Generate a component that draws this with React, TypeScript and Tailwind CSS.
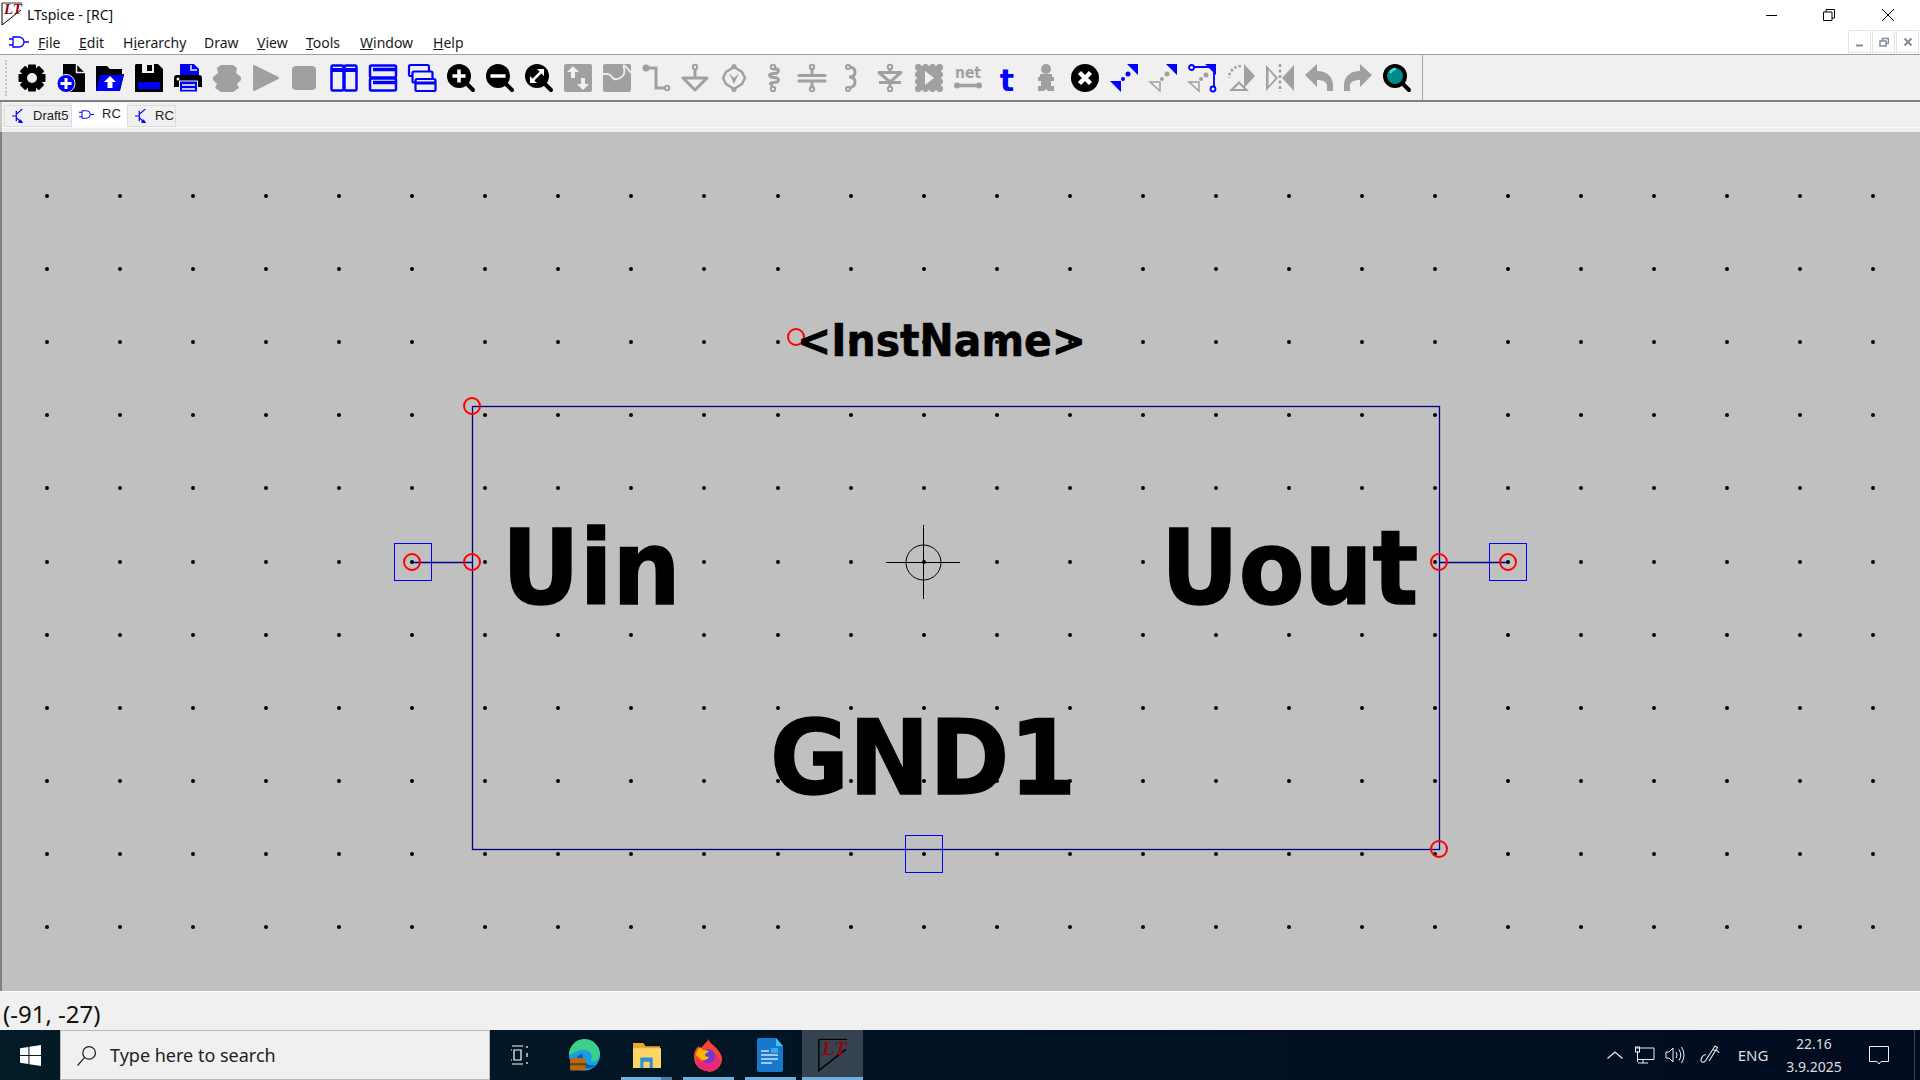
import type { ReactNode } from 'react';

const GRAY = '#a0a0a0';
const BLUE = '#0000ff';

const menuItems = [
    { pre: '', key: 'F', post: 'ile', w: 'w-[41px]' },
    { pre: '', key: 'E', post: 'dit', w: 'w-[44px]' },
    { pre: 'H', key: 'i', post: 'erarchy', w: 'w-[81px]' },
    { pre: '', key: '', post: 'Draw', w: 'w-[53px]' },
    { pre: '', key: 'V', post: 'iew', w: 'w-[49px]' },
    { pre: '', key: 'T', post: 'ools', w: 'w-[54px]' },
    { pre: '', key: 'W', post: 'indow', w: 'w-[73px]' },
    { pre: '', key: 'H', post: 'elp', w: 'w-[45px]' },
];

// toolbar glyphs, all in a 28x28 box
const toolIcons: ReactNode[] = [
    // settings
    <g key="gear" fill="#000">
        {[0, 45, 90, 135].map((a) => (
            <rect key={a} x="10" y="0.5" width="8" height="27" rx="1" transform={`rotate(${a} 14 14)`} />
        ))}
        <circle cx="14" cy="14" r="10.5" />
        <circle cx="14" cy="14" r="5" fill="#f0f0f0" />
    </g>,
    // new schematic
    <g key="new">
        <path d="M6 0h13l9 9v19H6z" fill="#000" />
        <path d="M19.500 0v8.500H28" fill="none" stroke="#f0f0f0" strokeWidth="1.500" />
        <circle cx="9" cy="19.500" r="9" fill={BLUE} stroke="#f0f0f0" strokeWidth="1" />
        <path d="M9 14v11M3.500 19.500h11" stroke="#fff" strokeWidth="3" />
    </g>,
    // open
    <g key="open">
        <path d="M0 2h11l3 3h12v5H0z" fill="#000" />
        <path d="M0 10h28l-4 17H0z" fill="#000" />
        <path d="M4 11h24l-4.500 16H0z" fill={BLUE} />
        <path d="M14 12l6 6h-3.500v6h-5v-6H8z" fill="#fff" />
    </g>,
    // save
    <g key="save">
        <path d="M1 0h22l5 5v23H0V1z" fill="#000" />
        <rect x="7" y="0" width="12" height="9" fill="#f0f0f0" />
        <rect x="12" y="1" width="5" height="6" fill="#000" />
        <rect x="3" y="18" width="22" height="7" fill={BLUE} />
    </g>,
    // print
    <g key="print">
        <path d="M6 0h14l5 5v6H6z" fill={BLUE} />
        <path d="M17 1v5h6" fill="none" stroke="#f0f0f0" strokeWidth="1.500" />
        <path d="M3 11h22q3 0 3 3v9H0v-9q0-3 3-3z" fill="#000" />
        <circle cx="4" cy="15" r="1.500" fill="#f0f0f0" />
        <rect x="5.500" y="17" width="18" height="11" fill={BLUE} stroke="#f0f0f0" strokeWidth="1" />
        <path d="M8 21h13M8 25h13" stroke="#fff" strokeWidth="1.500" />
    </g>,
    // halt
    <path key="halt" d="M8 1h12l4 3-1 5 5 4v3l-4 4 2 4-6 4H8l-6-4 2-4-4-4v-3l5-4-1-5z" fill={GRAY} />,
    // run
    <path key="run" d="M2 2l24 12L2 26z" fill={GRAY} stroke={GRAY} strokeWidth="2" strokeLinejoin="round" />,
    // stop
    <rect key="stop" x="1" y="2" width="24" height="24" rx="4" fill={GRAY} />,
    // tile vertically
    <g key="tilev" fill="none" stroke={BLUE} strokeWidth="2.500">
        <rect x="1.500" y="1.500" width="12" height="25" rx="1.500" />
        <rect x="14.500" y="1.500" width="12" height="25" rx="1.500" />
        <path d="M2 6h11M15 6h11" strokeWidth="4" />
    </g>,
    // tile horizontally
    <g key="tileh" fill="none" stroke={BLUE} strokeWidth="2.500">
        <rect x="1" y="1.500" width="26" height="12" rx="1.500" />
        <rect x="1" y="14.500" width="26" height="12" rx="1.500" />
        <path d="M4 5.500h22M4 18.500h22" strokeWidth="3.500" />
    </g>,
    // cascade
    <g key="cascade" stroke={BLUE} strokeWidth="2.200" fill="#f0f0f0">
        <rect x="1" y="1" width="20" height="11" rx="1.500" />
        <rect x="4.500" y="7.500" width="20" height="11" rx="1.500" />
        <rect x="7.500" y="15" width="20" height="12" rx="1.500" />
        <path d="M8 19h19" strokeWidth="3" />
    </g>,
    // zoom in
    <g key="zoomin">
        <path d="M18 18l8 8" stroke="#000" strokeWidth="4" strokeLinecap="round" />
        <circle cx="12" cy="12" r="12" fill="#000" />
        <path d="M12 5.500v13M5.500 12h13" stroke="#fff" strokeWidth="3.500" />
    </g>,
    // zoom out
    <g key="zoomout">
        <path d="M18 18l8 8" stroke="#000" strokeWidth="4" strokeLinecap="round" />
        <circle cx="12" cy="12" r="12" fill="#000" />
        <path d="M4.500 12h15" stroke="#fff" strokeWidth="3.500" />
    </g>,
    // zoom fit
    <g key="zoomfit">
        <path d="M18 18l8 8" stroke="#000" strokeWidth="4" strokeLinecap="round" />
        <circle cx="12" cy="12" r="12" fill="#000" />
        <path d="M7.500 16.500l9-9" stroke="#fff" strokeWidth="2.500" />
        <path d="M12 5h7v7zM12 19H5v-7z" fill="#fff" />
    </g>,
    // pan
    <g key="pan">
        <rect x="0" y="0" width="28" height="28" rx="2" fill={GRAY} />
        <path d="M9 2l6 6h-4v6H7V8H3zM19 26l-6-6h4v-6h4v6h4z" fill="#f0f0f0" />
    </g>,
    // waveform
    <g key="wave">
        <rect x="0" y="0" width="28" height="28" rx="2" fill={GRAY} />
        <path d="M0 10q7-1 9 3t8 1 4-10 7 5" fill="none" stroke="#f0f0f0" strokeWidth="1.800" />
    </g>,
    // wire
    <g key="wire" fill="none" stroke={GRAY} strokeWidth="3">
        <circle cx="4" cy="4" r="2" fill={GRAY} />
        <path d="M5 4h9v20h8" />
        <circle cx="25" cy="24" r="2.200" strokeWidth="2" />
    </g>,
    // ground
    <g key="gnd" fill="none" stroke={GRAY} strokeWidth="3">
        <circle cx="14" cy="3" r="2.200" strokeWidth="2" />
        <path d="M14 5v8M2 14h24L14 26z" strokeLinejoin="round" />
    </g>,
    // label
    <g key="label" fill="none" stroke={GRAY} strokeWidth="2.500">
        <circle cx="14" cy="2.500" r="1.800" strokeWidth="1.500" />
        <circle cx="14" cy="25.500" r="1.800" strokeWidth="1.500" />
        <path d="M14 3l8 5 3 6-3 6-8 5-8-5-3-6 3-6z" strokeLinejoin="round" />
        <path d="M9 9l5 11 5-11-5 5z" fill={GRAY} stroke="none" />
    </g>,
    // resistor
    <g key="res" fill="none" stroke={GRAY} strokeWidth="3">
        <circle cx="14" cy="3" r="2.200" strokeWidth="2" />
        <circle cx="14" cy="25" r="2.200" strokeWidth="2" />
        <path d="M14 5h4q3 1 0 4l-6 1q-3 1 0 3l6 1q3 2 0 4l-6 1q-2 1 2 2" />
    </g>,
    // capacitor
    <g key="cap" fill="none" stroke={GRAY} strokeWidth="3">
        <circle cx="14" cy="3" r="2.200" strokeWidth="2" />
        <circle cx="14" cy="25" r="2.200" strokeWidth="2" />
        <path d="M14 5v6M1 11.500h26M1 17h26M14 17v6" strokeLinecap="round" />
    </g>,
    // inductor
    <g key="ind" fill="none" stroke={GRAY} strokeWidth="3">
        <circle cx="11" cy="3" r="2" strokeWidth="2" />
        <circle cx="11" cy="25" r="2" strokeWidth="2" />
        <path d="M12 3q6 0 6 5t-6 5q6 0 6 5t-6 6" />
    </g>,
    // diode
    <g key="diode" fill="none" stroke={GRAY} strokeWidth="3">
        <circle cx="14" cy="3" r="2.200" strokeWidth="2" />
        <circle cx="14" cy="25" r="2.200" strokeWidth="2" />
        <path d="M14 5v3M3 8.500h22L14 18zM3 18.500h22M14 19v4" strokeLinejoin="round" />
    </g>,
    // component
    <g key="comp" fill={GRAY}>
        <rect x="0" y="0" width="28" height="28" rx="3" />
        {[7, 14, 21].map((p) => (
            <g key={p} fill="#f0f0f0">
                <circle cx="0" cy={p} r="1.800" />
                <circle cx="28" cy={p} r="1.800" />
                <circle cx={p} cy="0" r="1.800" />
                <circle cx={p} cy="28" r="1.800" />
            </g>
        ))}
        <path d="M10 7l9 7-9 7z" fill="#f0f0f0" />
    </g>,
    // net name
    <g key="net">
        <text x="1" y="14" textLength="26" lengthAdjust="spacingAndGlyphs" className="font-['DejaVu_Sans',sans-serif] font-bold text-[15px]" fill={GRAY}>net</text>
        <path d="M3 21.500h22" stroke={GRAY} strokeWidth="3.500" />
        <circle cx="3" cy="21.500" r="3" fill={GRAY} />
        <circle cx="25" cy="21.500" r="3" fill={GRAY} />
    </g>,
    // text
    <text key="t" x="14" y="27" textAnchor="middle" className="font-['DejaVu_Sans',sans-serif] font-bold text-[30px]" fill={BLUE}>t</text>,
    // spice directive
    <g key="dir" fill={GRAY}>
        <circle cx="14" cy="5" r="5" />
        <path d="M8 10h12v3h2v4h-3v5h3v5h-6l-2-2-2 2H6v-5h3v-5H6v-4h2z" />
    </g>,
    // delete
    <g key="del">
        <circle cx="14" cy="14" r="14" fill="#000" />
        <path d="M8.500 8.500l11 11M19.500 8.500l-11 11" stroke="#fff" strokeWidth="4.500" />
    </g>,
    // move
    <g key="move" fill={BLUE}>
        <path d="M28 0v11L17 0zM0 17h11v11z" />
        <circle cx="18" cy="10" r="2.500" />
        <circle cx="13" cy="15" r="2" />
    </g>,
    // drag
    <g key="drag">
        <path d="M28 0v11L17 0z" fill={BLUE} />
        <path d="M1 18h10v9z" fill="#f0f0f0" stroke={GRAY} strokeWidth="1.500" />
        <circle cx="18" cy="10" r="2.500" fill={GRAY} />
        <circle cx="13" cy="15" r="2" fill={GRAY} />
    </g>,
    // drag with wire
    <g key="wiredrag">
        <path d="M28 0v11L17 0z" fill={BLUE} />
        <path d="M1 18h10v9z" fill="#f0f0f0" stroke={GRAY} strokeWidth="1.500" />
        <circle cx="18" cy="11" r="2.500" fill={GRAY} />
        <circle cx="13" cy="15" r="2" fill={GRAY} />
        <path d="M5 3h21v21" fill="none" stroke={BLUE} strokeWidth="1.800" />
        <circle cx="3.500" cy="3.500" r="2.500" fill="#f0f0f0" stroke={BLUE} strokeWidth="1.800" />
        <circle cx="25" cy="25" r="2.500" fill="#f0f0f0" stroke={BLUE} strokeWidth="1.800" />
    </g>,
    // rotate
    <g key="rotate" fill={GRAY}>
        <path d="M17 0l11 12-11 12z" />
        <path d="M2 27l10-10 10 10zM7 25h10l-5-5z" fillRule="evenodd" />
        <path d="M14 2a12 12 0 0 0-12 12" fill="none" stroke={GRAY} strokeWidth="2.500" strokeDasharray="2.500 2" />
    </g>,
    // mirror
    <g key="mirror" fill={GRAY}>
        <path d="M28 1v26L16 14zM0 1v26l12-13zM2.500 6v16l7-8z" fillRule="evenodd" />
        <path d="M14 0v28" stroke={GRAY} strokeWidth="2.500" strokeDasharray="3 2.500" />
    </g>,
    // undo
    <path key="undo" d="M12 0v7c10 0 16 6 16 14v6h-6v-5c0-4-4-6-10-6v7L0 11z" fill={GRAY} />,
    // redo
    <path key="redo" d="M16 0v7C6 7 0 13 0 21v6h6v-5c0-4 4-6 10-6v7l12-12z" fill={GRAY} />,
    // find
    <g key="find">
        <path d="M18 18l8 8" stroke="#000" strokeWidth="4" strokeLinecap="round" />
        <circle cx="12" cy="12" r="10" fill="#008b8b" stroke="#000" strokeWidth="4" />
        <path d="M7 9q2-4 6-4" stroke="#40e0e0" strokeWidth="2.500" fill="none" />
    </g>,
];

const dotColumns = Array.from({ length: 26 }, (_, i) => Math.round(47 + i * 73.05));
const dotRows = [196, 269, 342, 415, 488, 562, 635, 708, 781, 854, 927];
const handles = [
    [472, 406],
    [472, 562],
    [412, 562],
    [1439, 562],
    [1508, 562],
    [1439, 849],
    [796, 337],
];

function GateIcon({ className }: { className: string }) {
    return (
        <svg viewBox="0 0 20 14" className={className} fill="none" stroke={BLUE} strokeWidth="1.300">
            <path d="M4 2h6a5 5 0 0 1 0 10H4zM0 4h4M0 10h4M15 7h5" />
        </svg>
    );
}

function TransistorIcon() {
    return (
        <svg viewBox="0 0 14 16" className="w-[12px] h-[14px]" fill="none" stroke={BLUE} strokeWidth="1.400">
            <path d="M0 8h5M5 2v12M12 0L5 6M5 10l7 6" />
            <path d="M12 16l-4-1 2-2z" fill={BLUE} />
        </svg>
    );
}

function LtLogo({ className }: { className: string }) {
    return (
        <svg viewBox="0 0 22 24" className={className}>
            <path d="M1 1v22L20 8" fill="none" stroke="#000" strokeWidth="1" />
            <path d="M1 1h20" stroke="#000" strokeWidth="0.800" />
            <text x="3" y="12" textLength="18" lengthAdjust="spacingAndGlyphs" className="font-['Liberation_Serif',serif] font-bold italic text-[14px]" fill="#8b0a14">LT</text>
        </svg>
    );
}

export default function App() {
    return (
        <div className="flex flex-col w-[1920px] h-[1080px] overflow-hidden bg-[#f0f0f0] font-['Noto_Sans',sans-serif] text-black">
            {/* title bar */}
            <div className="flex items-center h-[30px] bg-white">
                <LtLogo className="w-[22px] h-[24px] ml-[1px] mr-[4px] -mt-[2px]" />
                <span className="text-[14px] text-[#111] -mt-[2px]">LTspice - [RC]</span>
                <div className="ml-auto flex items-center mr-[2px]">
                    <div className="flex items-center justify-center w-[58px] h-[30px]">
                        <span className="w-[11px] h-px bg-black" />
                    </div>
                    <div className="flex items-center justify-center w-[58px] h-[30px]">
                        <svg viewBox="0 0 12 12" className="w-[12px] h-[12px]" fill="none" stroke="#000">
                            <path d="M0.500 3h8.500v8.500H0.500zM3 3V0.500h8.500V9H9" />
                        </svg>
                    </div>
                    <div className="flex items-center justify-center w-[60px] h-[30px]">
                        <svg viewBox="0 0 12 12" className="w-[12px] h-[12px]" fill="none" stroke="#000">
                            <path d="M0 0l12 12M12 0L0 12" />
                        </svg>
                    </div>
                </div>
            </div>

            {/* menu bar */}
            <div className="flex items-center h-[25px] bg-white border-b border-[#a0a0a0] text-[14px] text-[#1a1a1a]">
                <GateIcon className="w-[20px] h-[14px] ml-[9px] mr-[9px]" />
                {menuItems.map((item) => (
                    <div key={item.post} className={item.w}>
                        {item.pre}
                        <span className="underline">{item.key}</span>
                        {item.post}
                    </div>
                ))}
                <div className="ml-auto flex gap-[1px] mr-[1px] mb-[1px]">
                    {['-', 'r', 'x'].map((b) => (
                        <div key={b} className="flex items-center justify-center w-[23px] h-[23px] border border-[#e4e4e4]">
                            <svg viewBox="0 0 10 10" className="w-[10px] h-[10px]" fill="none" stroke="#7f8c99" strokeWidth="1.500">
                                {b === '-' && <path d="M1 8.500h7" strokeWidth="2" />}
                                {b === 'r' && <path d="M1 4h6v5H1zM3.500 4V1.500h6v5H7" />}
                                {b === 'x' && <path d="M1.500 1.500l7 7M8.500 1.500l-7 7" strokeWidth="2" />}
                            </svg>
                        </div>
                    ))}
                </div>
            </div>

            {/* toolbar */}
            <div className="flex items-center h-[47px] bg-[#f0f0f0] border-b-2 border-[#808080]">
                <div className="w-[18px] h-[36px] flex justify-center">
                    <div className="w-[2px] h-full border-l-2 border-dotted border-[#c4c4c4] -ml-[6px]" />
                </div>
                <div className="flex gap-[11px] w-[1405px] border-r border-[#a8a8a8] h-[45px] items-center">
                    {toolIcons.map((icon, i) => (
                        <svg key={i} viewBox="0 0 28 28" className="w-[28px] h-[28px] shrink-0 overflow-visible">
                            {icon}
                        </svg>
                    ))}
                </div>
            </div>

            {/* document tabs */}
            <div className="flex flex-col h-[30px] bg-[#f0f0f0] pl-[2px] border-l-2 border-[#c8c8c8] font-['Liberation_Sans',sans-serif] text-[13px] text-[#222]">
                <div className="flex h-[24px] mt-[1px]">
                    <div className="flex items-center w-[68px] h-[22px] mt-[2px] pl-[7px] gap-[9px] border border-[#dcdcdc]">
                        <TransistorIcon />
                        <span>Draft5</span>
                    </div>
                    <div className="flex items-center w-[55px] h-[24px] pl-[7px] gap-[8px] pb-[2px] bg-white">
                        <GateIcon className="w-[15px] h-[11px]" />
                        <span>RC</span>
                    </div>
                    <div className="flex items-center w-[49px] h-[22px] mt-[2px] pl-[7px] gap-[8px] border border-[#dcdcdc]">
                        <TransistorIcon />
                        <span>RC</span>
                    </div>
                </div>
                <div className="h-px bg-[#fafafa] -ml-[2px]" />
            </div>

            {/* schematic canvas */}
            <div className="relative flex-1 bg-[#c0c0c0] border-l-2 border-[#808080] overflow-hidden">
                <svg viewBox="2 132 1918 859" className="absolute inset-0 w-full h-full">
                    {dotRows.map((y) =>
                        dotColumns.map((x) => <circle key={`${x}-${y}`} cx={x} cy={y} r="2" fill="#000" />),
                    )}
                    <rect x="472.500" y="406.500" width="967" height="443" fill="none" stroke="#00008b" strokeWidth="1.300" />
                    <path d="M412 562.500h60M1439 562.500h69" stroke="#00008b" strokeWidth="1.300" />
                    <rect x="394.500" y="543.500" width="37" height="37" fill="none" stroke={BLUE} />
                    <rect x="1489.500" y="543.500" width="37" height="37" fill="none" stroke={BLUE} />
                    <rect x="905.500" y="835.500" width="37" height="37" fill="none" stroke={BLUE} />
                    <path d="M886 562.500h74M923.500 525v74" stroke="#000" />
                    <circle cx="923.500" cy="562.500" r="17.500" fill="none" stroke="#000" />
                    {handles.map(([x, y]) => (
                        <circle key={`${x}-${y}`} cx={x} cy={y} r="8" fill="none" stroke="#ff0000" strokeWidth="2" />
                    ))}
                </svg>
                <span className="absolute left-[795px] top-[187px] origin-left scale-x-[0.93] text-[44px] leading-none font-bold font-['DejaVu_Sans',sans-serif] whitespace-nowrap [-webkit-text-stroke:0.6px_black]">&lt;InstName&gt;</span>
                <span className="absolute left-[500px] top-[384px] origin-left scale-x-[0.92] text-[104px] leading-none font-bold font-['DejaVu_Sans',sans-serif] whitespace-nowrap [-webkit-text-stroke:1.5px_black]">Uin</span>
                <span className="absolute left-[1159px] top-[384px] origin-left scale-x-[0.92] text-[104px] leading-none font-bold font-['DejaVu_Sans',sans-serif] whitespace-nowrap [-webkit-text-stroke:1.5px_black]">Uout</span>
                <span className="absolute left-[768px] top-[574px] origin-left scale-x-[0.925] text-[104px] leading-none font-bold font-['DejaVu_Sans',sans-serif] whitespace-nowrap [-webkit-text-stroke:1.5px_black]">GND1</span>
            </div>

            {/* status bar */}
            <div className="flex items-center h-[39px] bg-[#f0f0f0] border-t border-white pl-[3px] pt-[6px] text-[24px] leading-none text-[#111]">
                (-91, -27)
            </div>

            {/* taskbar */}
            <div className="flex items-stretch h-[50px] bg-gradient-to-r from-[#021b27] to-[#020b20] text-white">
                <div className="flex items-center justify-center w-[60px]">
                    <svg viewBox="0 0 20 20" className="w-[21px] h-[21px]" fill="#fff">
                        <path d="M0 3l8-1.200v7.700H0zM9 1.600L20 0v9.500H9zM0 10.500h8v7.700L0 17zM9 10.500h11V20L9 18.400z" />
                    </svg>
                </div>
                <div className="flex items-center w-[430px] bg-[#f0f0f0] border border-[#b8b8b8] text-[#222]">
                    <svg viewBox="0 0 20 20" className="w-[21px] h-[21px] ml-[15px] mr-[13px]" fill="none" stroke="#222" strokeWidth="1.200">
                        <circle cx="12.500" cy="7.500" r="6" />
                        <path d="M8 12l-6.500 7.500" />
                    </svg>
                    <span className="text-[18px]">Type here to search</span>
                </div>
                <div className="flex items-center justify-center w-[59px]">
                    <svg viewBox="0 0 20 20" className="w-[20px] h-[20px]" fill="none" stroke="#fff" strokeWidth="1.200">
                        <path d="M2 1h11M2 19h11M4 5h7v10H4zM17 1v2M17 8v4M17 17v2M1 5h1M1 15h1M13 5h0" />
                    </svg>
                </div>
                {/* edge */}
                <div className="relative flex items-center justify-center w-[62px] ml-[4px]">
                    <svg viewBox="0 0 32 32" className="w-[33px] h-[34px]">
                        <circle cx="16" cy="16" r="15" fill="#1b9de2" />
                        <path d="M1 16A15 15 0 0 1 31 15c0 6-5 8-9 7 3-4 0-11-7-11-7 0-11 5-14 5z" fill="#3ccf8a" />
                        <path d="M14 15c-5 0-7 5-5 10 3 4 12 6 18 1-6 1-13-2-13-11z" fill="#0c59a4" />
                        <rect x="2" y="19" width="15" height="12" rx="1" fill="#b36a14" />
                        <rect x="2" y="24" width="15" height="2" fill="#6b3d08" />
                    </svg>
                </div>
                {/* explorer */}
                <div className="relative flex items-center justify-center w-[62px]">
                    <svg viewBox="0 0 28 28" className="w-[29px] h-[29px]">
                        <path d="M1 2h10l2 3h14v21H1z" fill="#e7a92c" />
                        <rect x="1" y="7" width="27" height="19" fill="#fbd667" />
                        <path d="M8 16h12v10h-3v-6h-6v6H8z" fill="#2f8ed8" />
                    </svg>
                    <span className="absolute bottom-0 left-[6px] right-[5px] h-[3px] bg-[#6fb0e0]" />
                    <span className="absolute bottom-0 left-[46px] right-[5px] h-[3px] bg-[#4a7ea6]" />
                </div>
                {/* firefox */}
                <div className="relative flex items-center justify-center w-[62px]">
                    <svg viewBox="0 0 30 34" className="w-[30px] h-[34px]">
                        <path d="M15 33C6 33 1 26 1 19 1 14 3 10 6 8l1 4c2-4 5-6 9-11 0 5 6 6 9 11 3 4 4 6 4 9 0 7-6 13-14 13z" fill="#f9452d" />
                        <path d="M15 33c-8 0-12-7-12-13 2 3 4 4 6 4 6 1 12-3 12-9 4 3 6 6 6 8 0 6-5 10-12 10z" fill="#e8267a" />
                        <circle cx="15" cy="18" r="7" fill="#6a3bd2" />
                        <path d="M3 17c1-5 3-7 5-8 0 2 1 3 3 3l5 1c-1 2-4 2-4 4 0 1 2 2 4 2-2 4-8 4-10 1z" fill="#ffb400" />
                    </svg>
                    <span className="absolute bottom-0 left-[6px] right-[5px] h-[3px] bg-[#6fb0e0]" />
                </div>
                {/* writer */}
                <div className="relative flex items-center justify-center w-[62px]">
                    <svg viewBox="0 0 26 34" className="w-[26px] h-[36px]">
                        <path d="M2 0h17l7 8v24q0 2-2 2H2q-2 0-2-2V2q0-2 2-2z" fill="#1878cc" />
                        <path d="M19 0l7 8h-7z" fill="#41c5f0" />
                        <path d="M4 13h8M4 17h17M4 21h17M4 25h11" stroke="#cfe3f7" strokeWidth="1.500" />
                        <rect x="14" y="10" width="7" height="5" fill="#41a5ee" />
                    </svg>
                    <span className="absolute bottom-0 left-[6px] right-[5px] h-[3px] bg-[#6fb0e0]" />
                </div>
                {/* ltspice, active */}
                <div className="relative flex items-center justify-center w-[61px] ml-[1px] bg-[#34434f]">
                    <LtLogo className="w-[32px] h-[34px]" />
                    <span className="absolute bottom-0 left-0 right-0 h-[3px] bg-[#6fb0e0]" />
                </div>

                {/* system tray */}
                <div className="ml-auto flex items-center">
                    <svg viewBox="0 0 16 8" className="w-[16px] h-[8px]" fill="none" stroke="#eee" strokeWidth="1.200">
                        <path d="M0.500 7.500L8 1l7.500 6.500" />
                    </svg>
                    <svg viewBox="0 0 20 18" className="w-[20px] h-[18px] ml-[12px]" fill="none" stroke="#eee" strokeWidth="1">
                        <path d="M1 2h18v11.500H3M3 17h10M8 13.500V17M2.500 5v11" />
                        <rect x="0.500" y="1" width="4" height="5" />
                    </svg>
                    <svg viewBox="0 0 20 18" className="w-[20px] h-[18px] ml-[10px]" fill="none" stroke="#eee" strokeWidth="1">
                        <path d="M1 6h3l4-4v14l-4-4H1zM11 6q2 3 0 6M14 3.500q3.500 5.500 0 11M16.500 1q5 8 0 16" />
                    </svg>
                    <svg viewBox="0 0 20 20" className="w-[20px] h-[20px] ml-[15px]" fill="none" stroke="#eee" strokeWidth="1.100">
                        <path d="M15 1L6 15q-2 3-4 2t0-5q2-3 4-2M15 1l2.500 1.500L9 16M13 5q5 0 6 3" />
                    </svg>
                    <span className="w-[44px] ml-[11px] text-[15px] text-center text-[#ddd]">ENG</span>
                    <div className="flex flex-col items-center w-[70px] ml-[4px] text-[14px] leading-[23px] text-[#ddd]">
                        <span>22.16</span>
                        <span>3.9.2025</span>
                    </div>
                    <svg viewBox="0 0 20 19" className="w-[20px] h-[19px] ml-[20px] mr-[4px]" fill="none" stroke="#eee" strokeWidth="1">
                        <path d="M0.500 0.500h19v15H12l-2 2.500-2-2.500H0.500z" />
                    </svg>
                    <span className="w-px h-full bg-[#3a4656] ml-[21px] mr-[5px]" />
                </div>
            </div>
        </div>
    );
}
